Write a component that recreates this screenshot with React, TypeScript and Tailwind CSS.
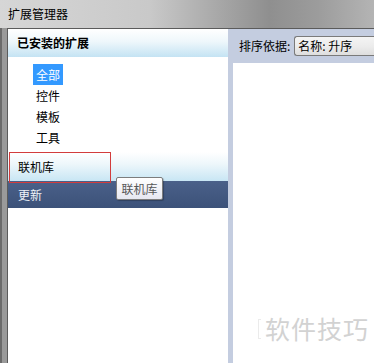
const font = { fontFamily: '"Microsoft YaHei", "Noto Sans CJK SC", sans-serif' };

const categories = ["全部", "控件", "模板", "工具"];

export default function App() {
  return (
    <div
      className="relative w-[374px] h-[363px] overflow-hidden bg-[#a9a9a9] text-[12px] text-black"
      style={font}
    >
      {/* title bar */}
      <div className="h-[28px] flex items-center pl-[8px] bg-[linear-gradient(90deg,#d6d6d6_0%,#c9c9c9_40%,#8f8f8f_72%,#9c9c9c_85%,#b4b4b4_100%)]">
        <span className="leading-none">扩展管理器</span>
      </div>

      <div className="flex h-[335px] pl-[7px] bg-[linear-gradient(90deg,#6b6b6b_0px,#6b6b6b_2px,#9a9a9a_2px,#9a9a9a_7px)]">
        <div className="flex flex-1 border-l border-t border-[#5b5b5b]">
          {/* left panel */}
          <div className="w-[220px] flex flex-col bg-white">
            <div className="h-[28px] flex items-center pl-[9px] font-bold bg-[linear-gradient(180deg,#ffffff_0%,#eef7fb_45%,#c4e3f3_100%)]">
              已安装的扩展
            </div>
            <div className="flex flex-col pt-[7px] pl-[25px] pb-[4px]">
              {categories.map((c, i) => (
                <div key={c} className="h-[21px] flex items-center">
                  <span
                    className={
                      i === 0
                        ? "h-[21px] px-[3px] flex items-center bg-[#3399ff] text-white"
                        : "px-[3px]"
                    }
                  >
                    {c}
                  </span>
                </div>
              ))}
            </div>
            <div className="relative h-[29px] flex items-center pl-[10px] bg-[linear-gradient(180deg,#ffffff_0%,#eef7fb_40%,#c8e6f4_100%)]">
              联机库
              <div className="absolute left-[1px] top-0 w-[102px] h-[31px] border border-[#d23c3c] z-10" />
            </div>
            <div className="h-[27px] flex items-center pl-[10px] text-[#eef2f8] bg-[linear-gradient(180deg,#4a6089_0%,#3c5279_100%)]">
              更新
            </div>
            <div className="flex-1 bg-white" />
          </div>

          {/* right panel */}
          <div className="flex-1 flex flex-col bg-[#c4cde0]">
            <div className="h-[34px] flex items-center pl-[11px] gap-[4px]">
              <span>排序依据:</span>
              <div className="h-[20px] flex-1 flex items-center pl-[3px] rounded-l-[3px] border border-r-0 border-[#7a7a7a] bg-[linear-gradient(180deg,#f4f4f4_0%,#ececec_50%,#dedede_100%)]">
                名称: 升序
              </div>
            </div>
            <div className="flex-1 ml-[5px] bg-white" />
          </div>
        </div>
      </div>

      {/* tooltip */}
      <div className="absolute left-[116px] top-[177px] w-[47px] h-[23px] flex items-center justify-center rounded-[2px] border border-[#7d7d7d] text-[#575757] bg-[linear-gradient(180deg,#ffffff_0%,#e6e7f0_100%)] shadow-[1px_1px_1px_rgba(0,0,0,0.25)]">
        联机库
      </div>

      {/* watermark */}
      <div className="absolute left-[258px] top-[316px] flex items-center gap-[4px] text-[#d2d2d2]">
        <span className="w-[3px] h-[20px] border-l border-t border-b border-[#ebebeb]" />
        <span className="text-[25px] leading-none tracking-[1px]">软件技巧</span>
      </div>
    </div>
  );
}
